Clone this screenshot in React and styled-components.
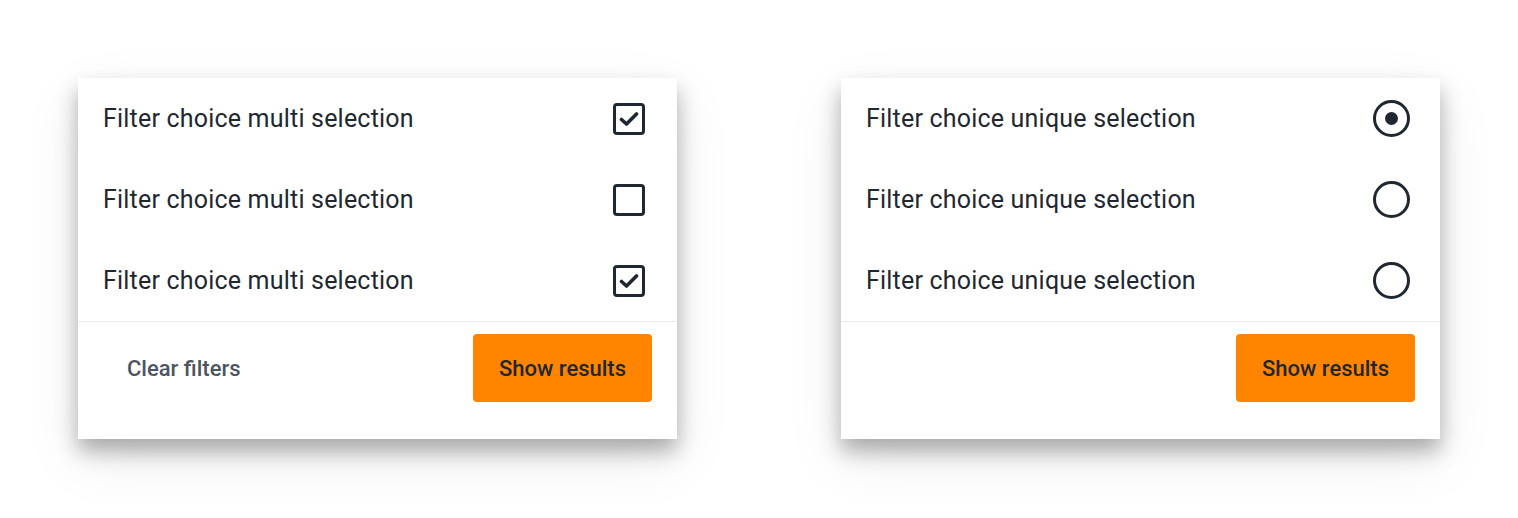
import React from 'react';
import styled, { createGlobalStyle } from 'styled-components';

const GlobalStyle = createGlobalStyle`
  body {
    margin: 0;
    background: #ffffff;
    font-family: 'Roboto', 'Liberation Sans', sans-serif;
  }
`;

const Page = styled.div`
  display: flex;
  justify-content: space-between;
  align-items: flex-start;
  padding: 78px 78px 0;
  height: 518px;
  box-sizing: border-box;
`;

const Card = styled.div`
  width: 599px;
  background: #ffffff;
  box-shadow: 0 12px 20px rgba(0, 0, 0, 0.3), 0 20px 56px rgba(0, 0, 0, 0.08);
  display: flex;
  flex-direction: column;
`;

const Row = styled.label`
  display: flex;
  align-items: center;
  justify-content: space-between;
  height: 81px;
  padding: 0 ${(props) => (props.radio ? '30px' : '32px')} 0 25px;
  font-size: 25px;
  letter-spacing: 0.2px;
  color: #1f2730;
  cursor: pointer;
`;

const Box = styled.span`
  width: 32px;
  height: 32px;
  box-sizing: border-box;
  border: 3px solid #1f2730;
  border-radius: 4px;
  display: flex;
  align-items: center;
  justify-content: center;
`;

const Radio = styled.span`
  width: 37px;
  height: 37px;
  box-sizing: border-box;
  border: 3px solid #1f2730;
  border-radius: 50%;
  display: flex;
  align-items: center;
  justify-content: center;
  &::after {
    content: '';
    display: ${(props) => (props.checked ? 'block' : 'none')};
    width: 13px;
    height: 13px;
    border-radius: 50%;
    background: #1f2730;
  }
`;

const Footer = styled.div`
  display: flex;
  align-items: center;
  justify-content: ${(props) => (props.single ? 'flex-end' : 'space-between')};
  border-top: 1px solid #e8eaed;
  padding: 12px 25px 37px;
`;

const Button = styled.button`
  font-family: 'Roboto', 'Liberation Sans', sans-serif;
  font-size: 22px;
  font-weight: 500;
  height: 68px;
  padding: 0 ${(props) => (props.primary ? '26px' : '24px')};
  border: none;
  border-radius: 4px;
  cursor: pointer;
  background: ${(props) => (props.primary ? '#ff8500' : 'transparent')};
  color: ${(props) => (props.primary ? '#1f2730' : '#4c5561')};
`;

const Check = () => (
  <svg width="20" height="16" viewBox="0 0 20 16">
    <path d="M2.5 8.5 L7.5 13 L17.5 3" fill="none" stroke="#1f2730" strokeWidth="3.6" strokeLinecap="round" strokeLinejoin="round" />
  </svg>
);

export default function App() {
  const multi = [true, false, true];
  const unique = [true, false, false];
  return (
    <>
      <GlobalStyle />
      <Page>
        <Card>
          {multi.map((checked, i) => (
            <Row key={i}>
              <span>Filter choice multi selection</span>
              <Box>{checked && <Check />}</Box>
            </Row>
          ))}
          <Footer>
            <Button>Clear filters</Button>
            <Button primary>Show results</Button>
          </Footer>
        </Card>
        <Card>
          {unique.map((checked, i) => (
            <Row key={i} radio>
              <span>Filter choice unique selection</span>
              <Radio checked={checked} />
            </Row>
          ))}
          <Footer single>
            <Button primary>Show results</Button>
          </Footer>
        </Card>
      </Page>
    </>
  );
}
